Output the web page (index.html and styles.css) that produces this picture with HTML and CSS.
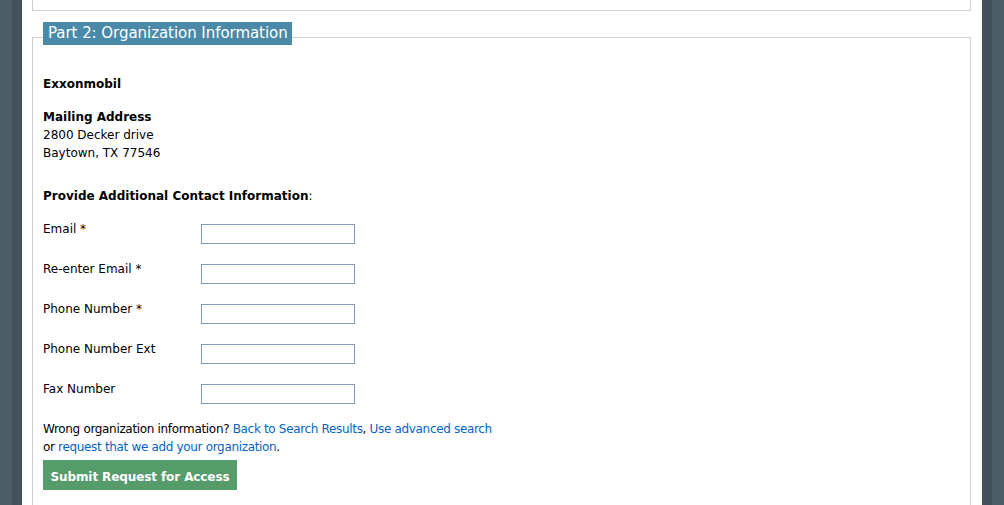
FILE: index.html
```html
<!DOCTYPE html>
<html>
<head>
<meta charset="utf-8">
<link rel="stylesheet" href="styles.css">
</head>
<body>
<div class="page">
  <div class="strip strip-outer"></div>
  <div class="strip strip-inner"></div>
  <main class="main">
    <div class="prev-box"></div>
    <section class="part">
      <div class="legend">Part 2: Organization Information</div>
      <p class="org">Exxonmobil</p>
      <p class="address"><b>Mailing Address</b><br>2800 Decker drive<br>Baytown, TX 77546</p>
      <p class="provide"><b>Provide Additional Contact Information</b>:</p>
      <div class="rows">
        <div class="row"><label class="lbl">Email *</label><input class="field" type="text"></div>
        <div class="row"><label class="lbl">Re-enter Email *</label><input class="field" type="text"></div>
        <div class="row"><label class="lbl">Phone Number *</label><input class="field" type="text"></div>
        <div class="row"><label class="lbl">Phone Number Ext</label><input class="field" type="text"></div>
        <div class="row"><label class="lbl">Fax Number</label><input class="field" type="text"></div>
      </div>
      <p class="wrong">Wrong organization information? <a href="#">Back to Search Results</a>, <a href="#">Use advanced search</a><br>or <a href="#">request that we add your organization</a>.</p>
      <button class="submit" type="button">Submit Request for Access</button>
    </section>
  </main>
  <div class="strip strip-inner"></div>
  <div class="strip strip-outer"></div>
</div>
</body>
</html>
```
FILE: styles.css
```css
html, body {
  margin: 0;
  padding: 0;
  height: 100%;
  overflow: hidden;
}
body {
  font-family: "DejaVu Sans", Verdana, sans-serif;
  font-size: 12px;
  line-height: 18px;
  color: #000;
}
.page {
  display: flex;
  height: 505px;
}
.strip {
  flex: none;
}
.strip-outer {
  width: 12px;
  background: #4c5d65;
}
.strip-inner {
  width: 10px;
  background: #43525a;
}
.main {
  flex: none;
  width: 960px;
  background: #fff;
  padding: 0 11px 0 10px;
  box-sizing: border-box;
}
.prev-box {
  height: 10px;
  border: 1px solid #cfcfcf;
  border-top: none;
}
.part {
  margin-top: 26px;
  border: 1px solid #cfcfcf;
  border-bottom: none;
  padding: 0 10px;
  height: 480px;
}
.legend {
  width: fit-content;
  margin-top: -16px;
  height: 23px;
  line-height: 23px;
  padding: 0 4px 0 5px;
  background: #4a8aa8;
  color: #fff;
  font-size: 15px;
  letter-spacing: -0.05px;
}
p {
  margin: 0;
}
.org {
  margin-top: 30px;
  font-weight: bold;
}
.address {
  margin-top: 15px;
}
.provide {
  margin-top: 25px;
}
.rows {
  margin-top: 15px;
  display: flex;
  flex-direction: column;
  gap: 16px;
}
.row {
  display: flex;
  align-items: flex-start;
  height: 24px;
}
.lbl {
  width: 158px;
  flex: none;
}
.field {
  margin: 4px 0 0 0;
  width: 154px;
  height: 20px;
  box-sizing: border-box;
  border: 1px solid #7f9db9;
  padding: 0 2px;
  font: inherit;
  background: #fff;
}
.wrong {
  margin-top: 16px;
  letter-spacing: -0.33px;
}
a {
  color: #0563c6;
  text-decoration: none;
}
.submit {
  display: block;
  margin-top: 4px;
  width: 194px;
  height: 30px;
  border: none;
  background: #569c6b;
  color: #fff;
  font-family: "DejaVu Sans", Verdana, sans-serif;
  font-weight: bold;
  font-size: 12px;
  letter-spacing: -0.1px;
  white-space: nowrap;
  padding: 4px 0 0 0;
  text-align: center;
}
```
